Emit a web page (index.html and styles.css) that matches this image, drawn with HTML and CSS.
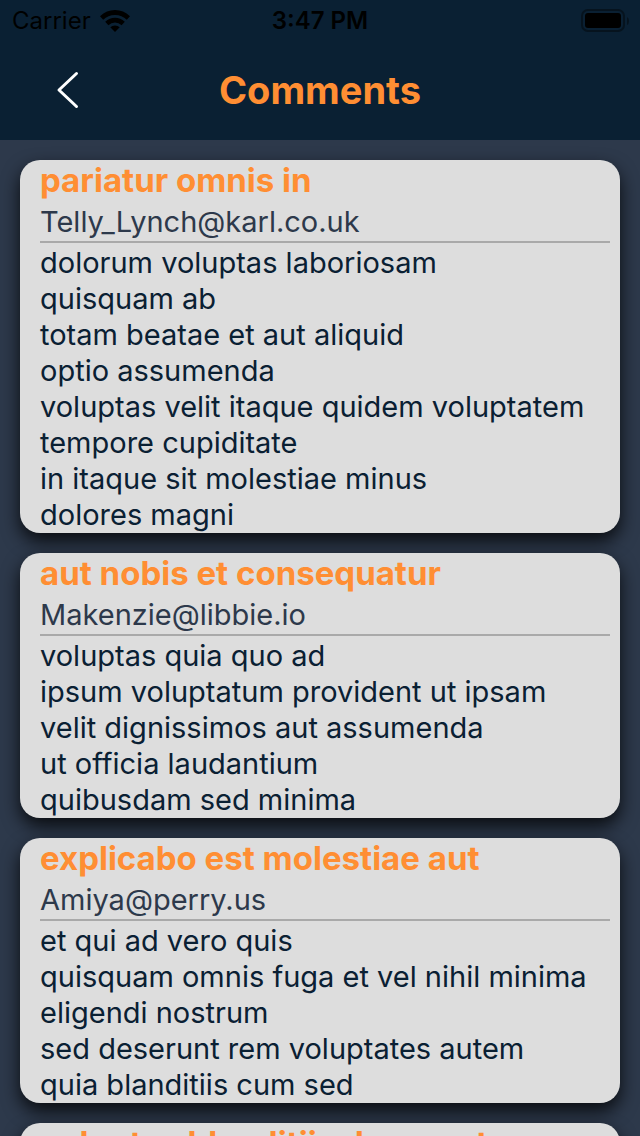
FILE: index.html
```html
<!DOCTYPE html>
<html lang="en">
<head>
<meta charset="utf-8">
<meta name="viewport" content="width=device-width">
<title>Comments</title>
<link rel="stylesheet" href="styles.css">
</head>
<body>
<div class="screen">
<header class="header">
  <div class="status">
    <div class="carrier"><span>Carrier</span>
      <svg width="30" height="24" viewBox="0 0 30 24" aria-hidden="true"><path d="M0 7.300Q6.500 1 15 1t15 6.300l-3.200 3.500Q22 6 15 6T3.200 10.800z"/><path d="M5.200 12.800Q9.500 8.800 15 8.800t9.800 4l-3.200 3.500Q18.800 13.400 15 13.400t-6.600 2.900z"/><path d="M10.300 18.300Q12.200 16.400 15 16.400t4.700 1.900L15 23z"/></svg>
    </div>
    <time class="clock">3:47 PM</time>
    <svg class="battery" width="48" height="24" viewBox="0 0 48 24" aria-hidden="true"><rect x="2" y="1" width="42" height="21" rx="6" fill="none" stroke="#06131e" stroke-width="2"/><rect x="5" y="4" width="36" height="15" rx="3"/><path d="M47 8q2 1 2 4t-2 4z" fill="#06131e"/></svg>
  </div>
  <div class="navbar">
    <button class="back" type="button" aria-label="Back"><svg width="24" height="40" viewBox="0 0 24 40" aria-hidden="true"><path d="M20.500 3.500 3 20 20.500 36.500" fill="none" stroke="#fff" stroke-width="3" stroke-linecap="round" stroke-linejoin="round"/></svg></button>
    <h1 class="heading">Comments</h1>
  </div>
</header>
<main class="list">
  <article class="card">
    <h2 class="title">pariatur omnis in</h2>
    <p class="email">Telly_Lynch@karl.co.uk</p>
    <p class="body">dolorum voluptas laboriosam
quisquam ab
totam beatae et aut aliquid
optio assumenda
voluptas velit itaque quidem voluptatem
tempore cupiditate
in itaque sit molestiae minus
dolores magni</p>
  </article>
  <article class="card">
    <h2 class="title">aut nobis et consequatur</h2>
    <p class="email">Makenzie@libbie.io</p>
    <p class="body">voluptas quia quo ad
ipsum voluptatum provident ut ipsam
velit dignissimos aut assumenda
ut officia laudantium
quibusdam sed minima</p>
  </article>
  <article class="card">
    <h2 class="title">explicabo est molestiae aut</h2>
    <p class="email">Amiya@perry.us</p>
    <p class="body">et qui ad vero quis
quisquam omnis fuga et vel nihil minima
eligendi nostrum
sed deserunt rem voluptates autem
quia blanditiis cum sed</p>
  </article>
  <article class="card">
    <h2 class="title">voluptas blanditiis deserunt</h2>
  </article>
</main>
</div>
</body>
</html>
```
FILE: styles.css
```css
* { box-sizing: border-box; }
body, h1, h2, p { margin: 0; }
body {
  background: #2d394b;
  font-family: Inter, "Liberation Sans", sans-serif;
}
.screen {
  display: flex;
  flex-direction: column;
  height: 100vh;
  overflow: hidden;
}
.header {
  flex: none;
  background: #0a2033;
}
.status {
  display: grid;
  grid-template-columns: 1fr auto 1fr;
  align-items: center;
  height: 40px;
  padding: 1px 12px 0;
  font-size: 24px;
  line-height: 28px;
  color: #000;
}
.carrier {
  display: flex;
  align-items: center;
  gap: 9px;
}
.clock { font-weight: 600; }
.battery { justify-self: end; overflow: visible; }
.navbar {
  display: grid;
  grid-template-columns: 1fr auto 1fr;
  align-items: center;
  height: 100px;
  padding: 0 56px;
}
.back {
  display: flex;
  justify-self: start;
  padding: 0;
  border: 0;
  background: none;
}
.heading {
  font-size: 38px;
  font-weight: 700;
  line-height: 46px;
  color: #ff8e33;
}
.list {
  display: flex;
  flex: 1;
  flex-direction: column;
  gap: 20px;
  min-height: 0;
  padding: 20px;
  overflow: hidden;
}
.card {
  flex: none;
  padding: 0 10px 0 20px;
  border-radius: 20px;
  background: #ddd;
  box-shadow: 0 8px 18px rgba(0, 0, 0, 0.8);
}
.title {
  font-size: 33px;
  font-weight: 700;
  line-height: 40px;
  color: #ff8e33;
}
.email {
  padding-top: 2px;
  border-bottom: 2px solid #a9a9a9;
  font-size: 29px;
  line-height: 39px;
  color: #2d394b;
}
.body {
  padding-top: 2px;
  font-size: 29px;
  line-height: 36px;
  white-space: pre-line;
  color: #0a2033;
}
```
